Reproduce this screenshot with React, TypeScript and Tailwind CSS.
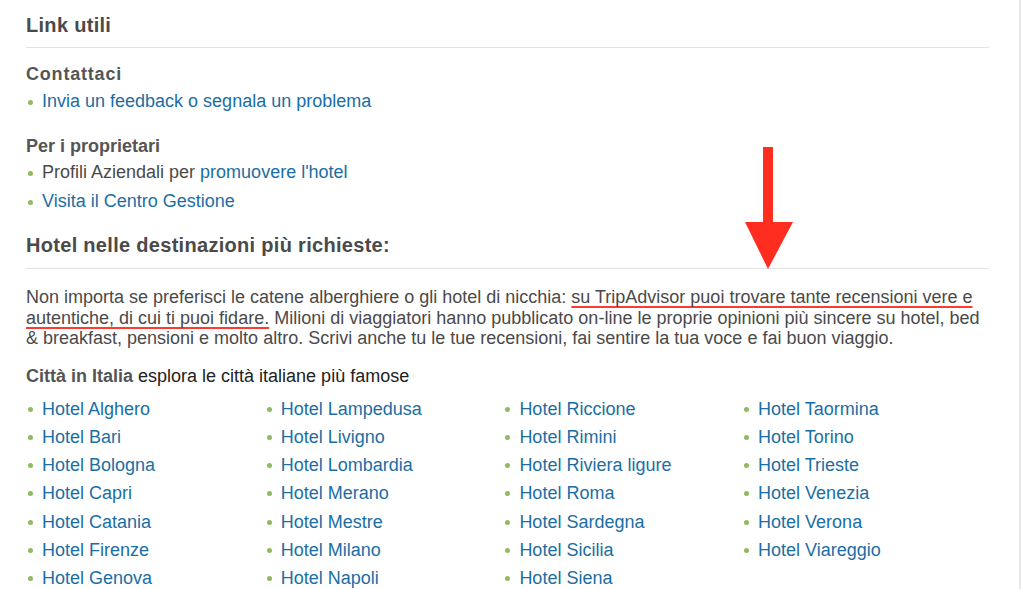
import React from "react";

const cols: string[][] = [
  ["Alghero", "Bari", "Bologna", "Capri", "Catania", "Firenze", "Genova"],
  ["Lampedusa", "Livigno", "Lombardia", "Merano", "Mestre", "Milano", "Napoli"],
  ["Riccione", "Rimini", "Riviera ligure", "Roma", "Sardegna", "Sicilia", "Siena"],
  ["Taormina", "Torino", "Trieste", "Venezia", "Verona", "Viareggio"],
];

function Bullet() {
  return <span className="absolute left-[2px] top-[13px] h-[5px] w-[5px] rounded-full bg-[#8fbb60]" />;
}

function Item({ children }: { children: React.ReactNode }) {
  return (
    <div className="relative pl-[16px] h-[28px] leading-[28px] whitespace-nowrap">
      <Bullet />
      {children}
    </div>
  );
}

export default function App() {
  return (
    <div
      className="flex w-[1024px] h-[589px] overflow-hidden bg-white text-[18px] text-[#4a4a4a]"
      style={{ fontFamily: '"Liberation Sans", Arial, Helvetica, sans-serif' }}
    >
      <div className="relative w-[1021px] border-r-2 border-[#e8e8e8] pl-[26px] pr-[30px]">
        <h2 className="pt-[13px] text-[20px] leading-[24px] font-bold tracking-[0.3px] text-[#4a4a4a]">Link utili</h2>
        <div className="mt-[10px] h-px bg-[#e2e2e2]" />
        <div className="mt-[15px] text-[18px] leading-[22px] font-bold text-[#555] tracking-[0.8px]">Contattaci</div>
        <div className="mt-[2px]">
          <Item>
            <span className="text-[#1b6ea3]">Invia un feedback o segnala un problema</span>
          </Item>
        </div>
        <div className="mt-[20px] text-[18px] leading-[22px] font-bold text-[#555]">Per i proprietari</div>
        <div className="mt-[1px]">
          <Item>
            Profili Aziendali per <span className="text-[#1b6ea3]">promuovere l'hotel</span>
          </Item>
          <div className="mt-[1px]">
            <Item>
              <span className="text-[#1b6ea3]">Visita il Centro Gestione</span>
            </Item>
          </div>
        </div>
        <h2 className="mt-[18px] text-[20px] leading-[24px] font-bold tracking-[0.3px] text-[#4a4a4a]">
          Hotel nelle destinazioni più richieste:
        </h2>
        <div className="mt-[11px] h-px bg-[#e2e2e2]" />
        <p className="mt-[18px] leading-[20.5px] whitespace-nowrap">
          Non importa se preferisci le catene alberghiere o gli hotel di nicchia:{" "}
          <span className="underline decoration-[#ff3b30] decoration-2 underline-offset-[3px] [text-decoration-skip-ink:none]">
            su TripAdvisor puoi trovare tante recensioni vere e
          </span>
          <br />
          <span className="underline decoration-[#ff3b30] decoration-2 underline-offset-[3px] [text-decoration-skip-ink:none]">
            autentiche, di cui ti puoi fidare.
          </span>{" "}
          Milioni di viaggiatori hanno pubblicato on-line le proprie opinioni più sincere su hotel, bed
          <br />
          &amp; breakfast, pensioni e molto altro. Scrivi anche tu le tue recensioni, fai sentire la tua voce e fai buon viaggio.
        </p>
        <div className="mt-[16px] leading-[22px] text-[#222]">
          <span className="font-bold text-[#555]">Città in Italia</span> esplora le città italiane più famose
        </div>
        <div className="mt-[8px] flex">
          {cols.map((c, i) => (
            <div key={i} className="w-[238.7px] shrink-0">
              {c.map((n) => (
                <div key={n} className="relative h-[28.33px] leading-[28.33px] pl-[16px] whitespace-nowrap">
                  <span className="absolute left-[2px] top-[12px] h-[5px] w-[5px] rounded-full bg-[#8fbb60]" />
                  <span className="text-[#1b6ea3]">Hotel {n}</span>
                </div>
              ))}
            </div>
          ))}
        </div>

        <svg className="absolute left-[745px] top-[147px]" width="48" height="122" viewBox="0 0 48 122">
          <rect x="18" y="0" width="10" height="76" fill="#ff2d20" />
          <polygon points="0,75 48,75 23,122" fill="#ff2d20" />
        </svg>
      </div>
    </div>
  );
}
